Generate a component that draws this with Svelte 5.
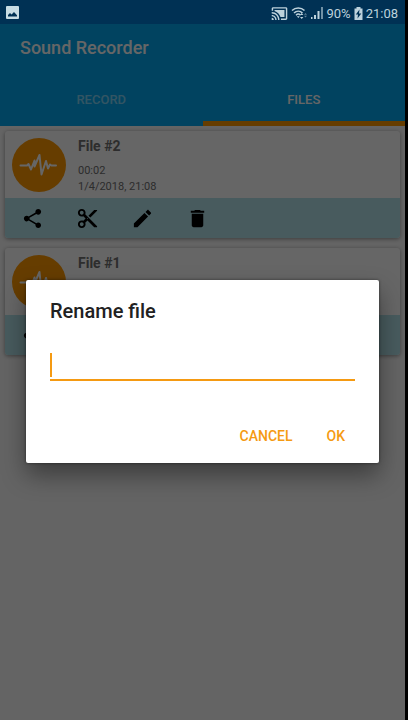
<script>
  const files = [
    { name: 'File #2', details: ['00:02', '1/4/2018, 21:08'] },
    { name: 'File #1', details: [] }
  ];
  const actions = [
    { label: 'Share', path: 'M18 16.08c-.76 0-1.44.3-1.96.77L8.91 12.7c.05-.23.09-.46.09-.7s-.04-.47-.09-.7l7.05-4.11c.54.5 1.25.81 2.04.81 1.66 0 3-1.34 3-3s-1.34-3-3-3-3 1.34-3 3c0 .24.04.47.09.7L8.04 9.81C7.5 9.31 6.79 9 6 9c-1.66 0-3 1.34-3 3s1.34 3 3 3c.79 0 1.5-.31 2.04-.81l7.12 4.16c-.05.21-.08.43-.08.65 0 1.61 1.31 2.92 2.92 2.92s2.92-1.31 2.92-2.92-1.31-2.92-2.92-2.92z' },
    { label: 'Trim', path: 'M9.64 7.64c.23-.5.36-1.05.36-1.64 0-2.21-1.79-4-4-4S2 3.79 2 6s1.79 4 4 4c.59 0 1.14-.13 1.64-.36L10 12l-2.36 2.36C7.14 14.13 6.59 14 6 14c-2.21 0-4 1.79-4 4s1.79 4 4 4 4-1.79 4-4c0-.59-.13-1.14-.36-1.64L12 14l7 7h3v-1L9.64 7.64zM6 8c-1.1 0-2-.89-2-2s.9-2 2-2 2 .89 2 2-.9 2-2 2zm0 12c-1.1 0-2-.89-2-2s.9-2 2-2 2 .89 2 2-.9 2-2 2zm6-7.5c-.28 0-.5-.22-.5-.5s.22-.5.5-.5.5.22.5.5-.22.5-.5.5zM19 3l-6 6 2 2 7-7V3z' },
    { label: 'Rename', path: 'M3 17.25V21h3.75L17.81 9.94l-3.75-3.75L3 17.25zM20.71 7.04c.39-.39.39-1.02 0-1.41l-2.34-2.34c-.39-.39-1.02-.39-1.41 0l-1.83 1.83 3.75 3.75 1.83-1.83z' },
    { label: 'Delete', path: 'M6 19c0 1.1.9 2 2 2h8c1.1 0 2-.9 2-2V7H6v12zM19 4h-3.5l-1-1h-5l-1 1H5v2h14V4z' }
  ];
  let fileName = $state('');
</script>

<div class="screen">
  <div class="statusbar">
    <svg width="13" height="13" viewBox="0 0 13 13" aria-hidden="true">
      <rect width="13" height="13" rx="1" fill="#c8dde4" />
      <path d="M2 10.5V9l2-2 1.5 1.5L8 6l3 3.2v1.3z" fill="#003154" />
    </svg>
    <div class="indicators">
      <svg width="17" height="17" viewBox="0 0 24 24" aria-hidden="true">
        <path fill="currentColor" d="M1 18v3h3c0-1.66-1.34-3-3-3zm0-4v2c2.76 0 5 2.24 5 5h2c0-3.87-3.13-7-7-7zm18-7H5v1.63c3.96 1.28 7.09 4.41 8.37 8.37H19V7zM1 10v2c4.97 0 9 4.03 9 9h2c0-6.08-4.93-11-11-11zm20-7H3c-1.1 0-2 .9-2 2v3h2V5h18v14h-7v2h7c1.1 0 2-.9 2-2V5c0-1.1-.9-2-2-2z" />
      </svg>
      <svg width="17" height="14" viewBox="0 0 17 14" fill="none" stroke="currentColor" aria-hidden="true">
        <path stroke-width="1.5" d="M1 4.5C4.5 1 10 1 13.5 4.5M3 7c2.5-2.5 6-2.5 8.5 0M5 9.2c1.5-1.5 3-1.5 4.5 0" />
        <path fill="currentColor" stroke="none" d="M5.8 10.2h3L7.3 12zM9 9l1.7-2 1.7 2zM9 11l1.7 2 1.7-2z" />
        <path fill="currentColor" stroke="none" d="M13 8.7l1.5-1.7L16 8.7zM13 9.7l1.5 1.7L16 9.7z" opacity=".5" />
      </svg>
      <svg width="12" height="12" viewBox="0 0 12 12" fill="currentColor" aria-hidden="true">
        <path d="M0 10h1.5v2H0zM3 8h2v4H3zM6.500 4h2v8h-2z" />
        <path d="M10 0h2v12h-2z" opacity=".6" />
      </svg>
      <span>90%</span>
      <svg width="9" height="13" viewBox="0 0 9 13" aria-hidden="true">
        <path fill="currentColor" d="M2.5 0h4v1.5H8.5V13h-8V1.5h2z" />
        <path fill="#003154" d="M5.5 2.5 1.8 7.5h2.2L3.5 11.5l3.8-5H5z" />
      </svg>
      <span>21:08</span>
    </div>
  </div>

  <header>
    <h1>Sound Recorder</h1>
    <nav>
      <a href="#record">RECORD</a>
      <a href="#files" class="active" aria-current="page">FILES</a>
    </nav>
  </header>

  <main>
    {#each files as file}
      <article>
        <div class="info">
          <svg width="54" height="54" viewBox="0 0 54 54" aria-hidden="true">
            <circle cx="27" cy="27" r="27" fill="#ff9800" />
            <path d="M8.5 27.5h6.500l1.500-1.500 2.500 5.500 3.500-9v6L27.500 17l2 19.500 4.500-13.500 2 7.500 2-4 1.500 1H44" fill="none" stroke="#fff" stroke-width="2" stroke-linejoin="round" stroke-linecap="round" />
          </svg>
          <div class="text">
            <h2>{file.name}</h2>
            {#each file.details as detail}
              <p>{detail}</p>
            {/each}
          </div>
        </div>
        <div class="actions">
          {#each actions as action}
            <button type="button" aria-label={action.label}>
              <svg width="23" height="23" viewBox="0 0 24 24" aria-hidden="true"><path d={action.path} /></svg>
            </button>
          {/each}
        </div>
      </article>
    {/each}
  </main>

  <div class="scrim">
    <form class="dialog" role="dialog" aria-modal="true" aria-labelledby="dialog-title" onsubmit={(e) => e.preventDefault()}>
      <h2 id="dialog-title">Rename file</h2>
      <div class="field">
        <input type="text" aria-labelledby="dialog-title" bind:value={fileName} />
        {#if !fileName}<span class="caret"></span>{/if}
      </div>
      <div class="buttons">
        <button type="button">CANCEL</button>
        <button type="submit">OK</button>
      </div>
    </form>
  </div>
</div>

<style>
  :global(body) {
    margin: 0;
    background: #000;
  }
  .screen {
    position: relative;
    box-sizing: border-box;
    min-height: 100vh;
    margin-right: 3px;
    background: #fafafa;
    font-family: Roboto, "Liberation Sans", sans-serif;
  }
  h1, h2, p {
    margin: 0;
  }
  button {
    border: 0;
    padding: 0;
    background: none;
    font-family: inherit;
  }
  svg {
    display: block;
    flex: none;
  }
  .statusbar {
    position: relative;
    z-index: 2;
    display: flex;
    align-items: center;
    justify-content: space-between;
    height: 24px;
    padding: 0 7px 0 6px;
    background: #003154;
    color: #bdd2dc;
    font-size: 13px;
  }
  .indicators {
    display: flex;
    align-items: center;
    gap: 3px;
    padding-top: 2px;
  }
  header {
    background: #03a9f0;
    color: #fff;
  }
  h1 {
    padding: 0 20px;
    font-size: 18px;
    line-height: 48px;
    font-weight: 500;
  }
  nav {
    display: flex;
  }
  nav a {
    flex: 1;
    box-sizing: border-box;
    height: 54px;
    padding-top: 4px;
    border-bottom: 5px solid transparent;
    color: rgba(255, 255, 255, 0.5);
    font-size: 13px;
    line-height: 48px;
    font-weight: 500;
    text-align: center;
    text-decoration: none;
  }
  nav .active {
    border-color: #ff9800;
    color: #fff;
  }
  main {
    display: flex;
    flex-direction: column;
    gap: 10px;
    padding: 5px;
  }
  article {
    border-radius: 3px;
    overflow: hidden;
    background: #fff;
    box-shadow: 0 1px 4px rgba(0, 0, 0, 0.4);
  }
  .info {
    display: flex;
    align-items: flex-start;
    gap: 12px;
    padding: 7px 7px 0;
    height: 60px;
  }
  .text {
    color: #707070;
  }
  .text h2 {
    margin-bottom: 9px;
    font-size: 14px;
    line-height: 16px;
    font-weight: 700;
  }
  .text p {
    font-size: 11px;
    line-height: 16px;
  }
  .actions {
    display: flex;
    gap: 32px;
    height: 40px;
    padding: 0 16px;
    background: #b4e3ec;
  }
  .scrim {
    position: absolute;
    inset: 0;
    z-index: 1;
    display: flex;
    align-items: center;
    padding: 23px 26px 0;
    background: rgba(0, 0, 0, 0.6);
  }
  .dialog {
    flex: 1;
    box-sizing: border-box;
    padding: 17px 24px 9px;
    border-radius: 2px;
    background: #fff;
    box-shadow: 0 12px 24px rgba(0, 0, 0, 0.4), 0 0 3px rgba(0, 0, 0, 0.5);
  }
  .dialog h2 {
    color: #212121;
    font-size: 20px;
    line-height: 28px;
    font-weight: 500;
  }
  .field {
    position: relative;
    margin-top: 20px;
  }
  input {
    display: block;
    box-sizing: border-box;
    width: 100%;
    height: 36px;
    padding: 4px 0;
    border: 0;
    border-bottom: 2px solid #f59a12;
    border-radius: 0;
    outline: 0;
    background: none;
    color: #212121;
    font: 18px Roboto, sans-serif;
    caret-color: #f59a12;
  }
  .caret {
    position: absolute;
    left: 0;
    top: 8px;
    width: 2px;
    height: 24px;
    background: #f59a12;
  }
  .buttons {
    display: flex;
    justify-content: flex-end;
    gap: 34px;
    margin-top: 37px;
    padding-right: 10px;
  }
  .buttons button {
    height: 36px;
    color: #f59a12;
    font-size: 14px;
    font-weight: 500;
  }
</style>
